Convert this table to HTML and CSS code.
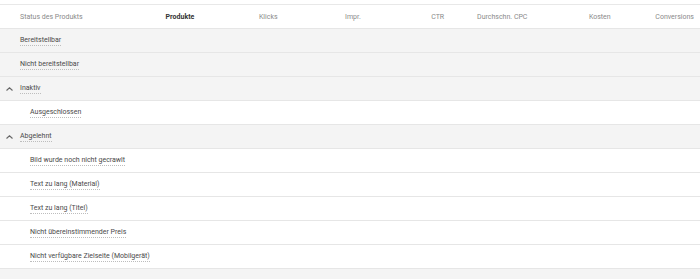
FILE: index.html
```html
<!DOCTYPE html>
<html lang="de">
<head>
    <meta charset="UTF-8">
    <title>Status des Produkts</title>
    <link rel="stylesheet" href="styles.css">
</head>
<body>
    <div class="status-table">
        <div class="row header">
            <div class="cell first">Status des Produkts</div>
            <div class="cell num active">Produkte</div>
            <div class="cell num">Klicks</div>
            <div class="cell num">Impr.</div>
            <div class="cell num">CTR</div>
            <div class="cell num">Durchschn. CPC</div>
            <div class="cell num">Kosten</div>
            <div class="cell num">Conversions</div>
        </div>

        <div class="row grey"><span class="label">Bereitstellbar</span></div>
        <div class="row grey"><span class="label">Nicht bereitstellbar</span></div>

        <div class="row grey group">
            <svg class="chevron" width="7" height="4" viewBox="0 0 7 4"><polyline points="0.5,3.5 3.5,0.8 6.5,3.5" fill="none" stroke="#666" stroke-width="1.1"/></svg>
            <span class="label">Inaktiv</span>
        </div>
        <div class="row child"><span class="label">Ausgeschlossen</span></div>

        <div class="row grey group">
            <svg class="chevron" width="7" height="4" viewBox="0 0 7 4"><polyline points="0.5,3.5 3.5,0.8 6.5,3.5" fill="none" stroke="#666" stroke-width="1.1"/></svg>
            <span class="label">Abgelehnt</span>
        </div>
        <div class="row child"><span class="label">Bild wurde noch nicht gecrawlt</span></div>
        <div class="row child"><span class="label">Text zu lang (Material)</span></div>
        <div class="row child"><span class="label">Text zu lang (Titel)</span></div>
        <div class="row child"><span class="label">Nicht übereinstimmender Preis</span></div>
        <div class="row child"><span class="label">Nicht verfügbare Zielseite (Mobilgerät)</span></div>

        <div class="row grey last"></div>
    </div>
</body>
</html>
```

FILE: styles.css
```css
/* --- General Setup --- */
body {
    margin: 0;
    background: #ffffff;
    font-family: Roboto, "Liberation Sans", sans-serif;
    font-size: 7px;
    color: #4a4a4a;
    overflow: hidden;
}

.status-table {
    padding-top: 4px;
}

/* --- Rows --- */
.row {
    height: 23px;
    display: flex;
    align-items: center;
    padding-left: 20px;
    border-bottom: 1px solid #e6e6e6;
}

.row.grey {
    background-color: #f4f4f4;
}

.row.child {
    padding-left: 30px;
}

.row.group {
    padding-left: 6px;
}

.row.last {
    height: 11px;
    border-bottom: none;
}

.chevron {
    margin-right: 7px;
}

.label {
    border-bottom: 1px dotted #bdbdbd;
    padding-bottom: 1px;
    line-height: 8px;
}

/* --- Header --- */
.row.header {
    display: grid;
    grid-template-columns: 117px repeat(7, 1fr);
    padding-left: 0;
    border-top: 1px solid #e8e8e8;
    color: #8a8a8a;
}

.cell.first {
    padding-left: 20px;
}

.cell.num {
    text-align: right;
    padding-right: 6px;
}

.cell.active {
    color: #333;
    font-weight: 700;
}
```
